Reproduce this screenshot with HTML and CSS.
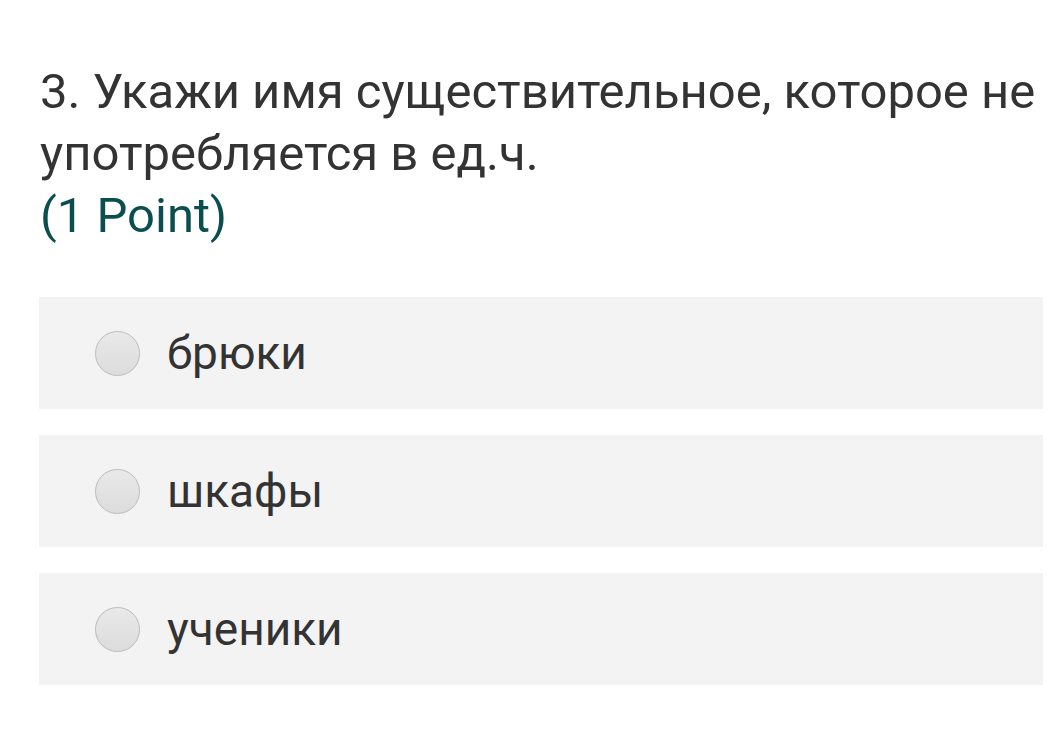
FILE: index.html
```html
<!DOCTYPE html>
<html lang="ru">
<head>
<meta charset="utf-8">
<link rel="stylesheet" href="styles.css">
</head>
<body>
<div class="question">
  <div class="title">3. Укажи имя существительное, которое не употребляется в ед.ч.<br><span class="points">(1 Point)</span></div>
  <div class="options">
    <label class="option"><span class="radio"></span><span class="label">брюки</span></label>
    <label class="option"><span class="radio"></span><span class="label">шкафы</span></label>
    <label class="option"><span class="radio"></span><span class="label">ученики</span></label>
  </div>
</div>
</body>
</html>
```

FILE: styles.css
```css
html, body {
  margin: 0;
  padding: 0;
  background: #ffffff;
}
body {
  font-family: Roboto, "Noto Sans", sans-serif;
  color: #333333;
}
.question {
  padding: 61px 9px 0 39px;
}
.title {
  font-size: 49px;
  line-height: 62px;
  padding-left: 1px;
}
.points {
  color: #0b4e50;
}
.options {
  margin-top: 50px;
  display: flex;
  flex-direction: column;
  gap: 26px;
}
.option {
  height: 112px;
  background: #f3f3f3;
  display: flex;
  align-items: center;
  padding-left: 56px;
  gap: 27px;
}
.radio {
  width: 43px;
  height: 43px;
  border-radius: 50%;
  border: 1px solid #bdbdbd;
  background: linear-gradient(#e9e9e9, #dcdcdc);
  box-shadow: 0 0 1px rgba(0,0,0,0.08);
  flex: none;
}
.label {
  font-size: 46px;
  line-height: 52px;
}
```
